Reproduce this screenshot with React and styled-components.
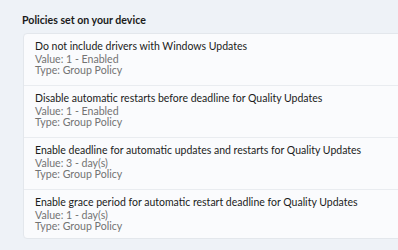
import styled, { createGlobalStyle } from 'styled-components';

const GlobalStyle = createGlobalStyle`
	html, body {
		margin: 0;
		padding: 0;
		background-color: #eef2f7;
		overflow: hidden;
	}
	body {
		font-family: Lato, "Noto Sans", sans-serif;
		color: #1b1b1b;
	}
`;

const Page = styled.div`
	width: 398px;
	height: 250px;
	padding: 11px 0 0 22px;
	box-sizing: border-box;
	overflow: hidden;
`;

const Heading = styled.h2`
	margin: 0 0 4px 0;
	font-size: 10.6px;
	line-height: 18px;
	font-weight: 700;
	color: #1a1a1a;
`;

const Card = styled.div`
	width: 400px;
	margin-left: 1px;
	background-color: #fafbfd;
	border: 1px solid #e3e7ec;
	border-radius: 4px;
	display: flex;
	flex-direction: column;
`;

const Row = styled.div`
	padding: 5px 12px 9px 11px;
	display: flex;
	flex-direction: column;
	border-top: ${props => props.first ? 'none' : '1px solid #e9ecf0'};

	&:last-child {
		padding-bottom: 6px;
	}
`;

const Title = styled.div`
	font-size: 10.5px;
	line-height: 15px;
	color: #1b1b1b;
	white-space: nowrap;
`;

const Detail = styled.div`
	font-size: 10.6px;
	line-height: 11px;
	color: #737373;
	white-space: nowrap;
`;

const policies = [
	{ title: 'Do not include drivers with Windows Updates', value: '1 - Enabled' },
	{ title: 'Disable automatic restarts before deadline for Quality Updates', value: '1 - Enabled' },
	{ title: 'Enable deadline for automatic updates and restarts for Quality Updates', value: '3 - day(s)' },
	{ title: 'Enable grace period for automatic restart deadline for Quality Updates', value: '1 - day(s)' },
];

export default function App() {
	return (
		<>
			<GlobalStyle />
			<Page>
				<Heading>Policies set on your device</Heading>
				<Card>
					{policies.map((p, i) => (
						<Row key={p.title} first={i === 0}>
							<Title>{p.title}</Title>
							<Detail>Value: {p.value}</Detail>
							<Detail>Type: Group Policy</Detail>
						</Row>
					))}
				</Card>
			</Page>
		</>
	);
}
